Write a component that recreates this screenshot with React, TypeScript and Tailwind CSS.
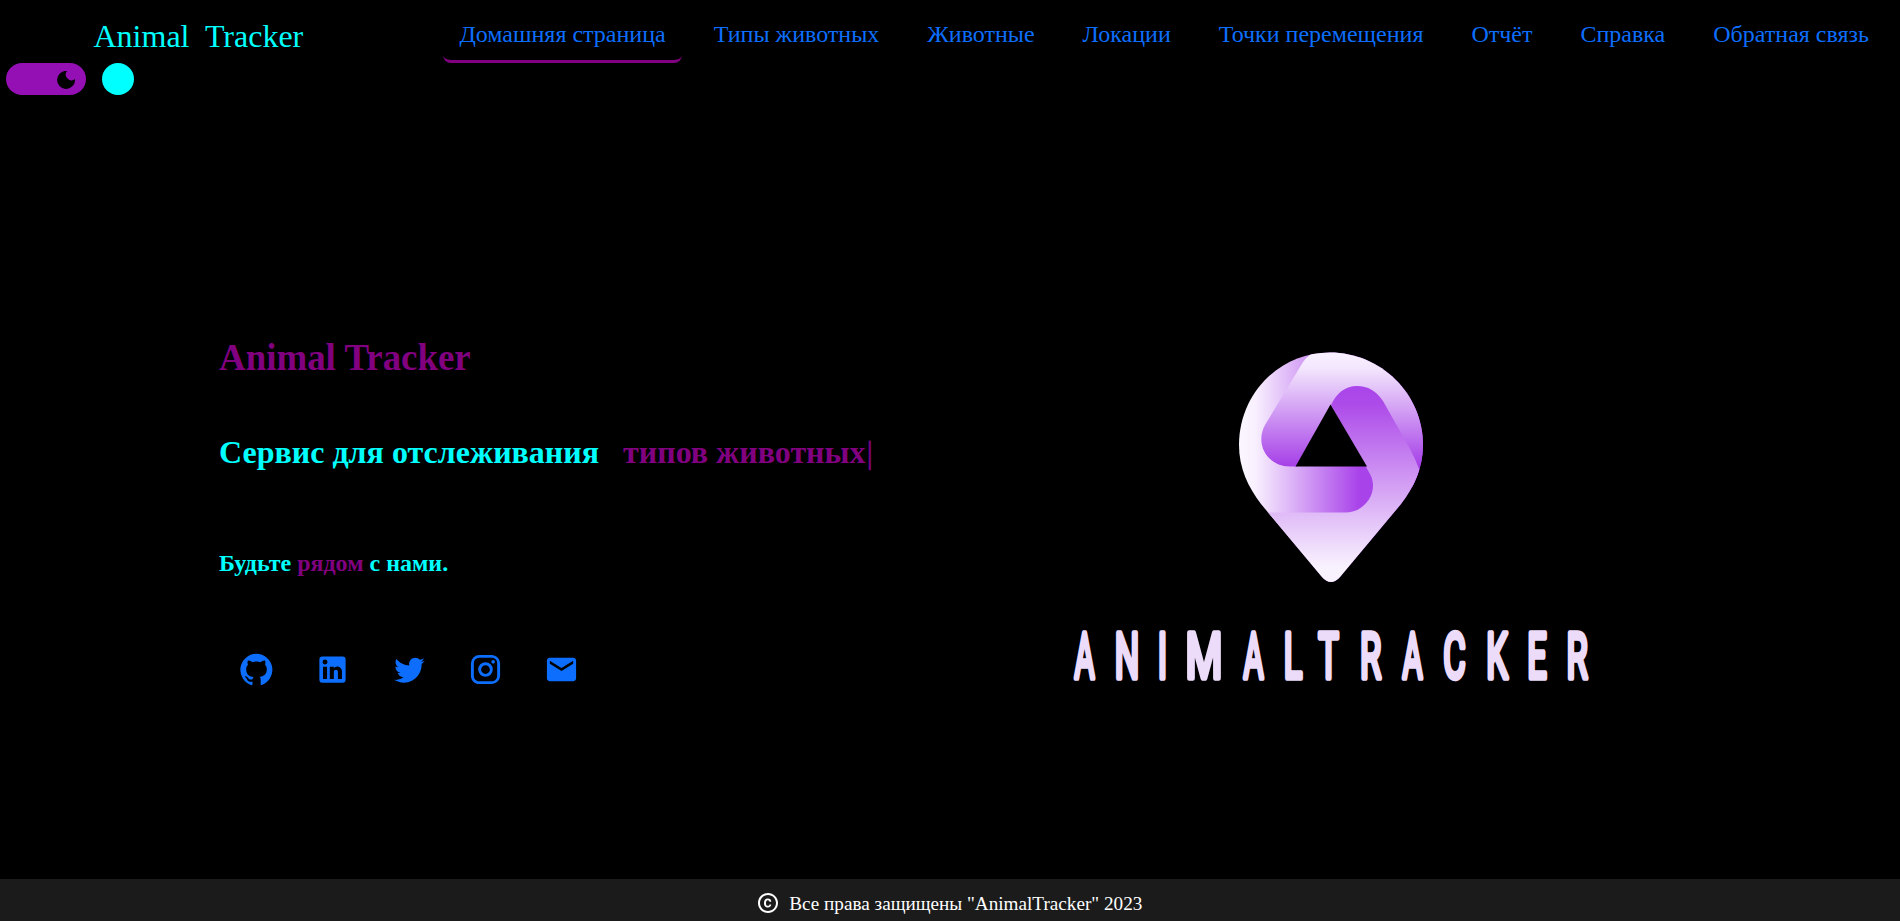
import React from "react";
import { MdEmail, MdCopyright } from "react-icons/md";

const links = [
  "Домашняя страница",
  "Типы животных",
  "Животные",
  "Локации",
  "Точки перемещения",
  "Отчёт",
  "Справка",
  "Обратная связь",
];

const socialPaths = [
  "M12 1.27a11 11 0 00-3.48 21.46c.55.09.73-.28.73-.55v-1.84c-3.03.64-3.67-1.46-3.67-1.46-.55-1.29-1.28-1.65-1.28-1.65-.92-.65.1-.65.1-.65 1.1 0 1.73 1.1 1.73 1.1.92 1.65 2.57 1.2 3.21.92a2 2 0 01.64-1.47c-2.47-.27-5.04-1.19-5.04-5.5 0-1.1.46-2.1 1.2-2.84a3.76 3.76 0 010-2.93s.91-.28 3.11 1.1c1.8-.49 3.7-.49 5.5 0 2.1-1.38 3.02-1.1 3.02-1.1a3.76 3.76 0 01.1 2.83c.74.74 1.2 1.74 1.2 2.94 0 4.21-2.57 5.13-5.04 5.4.45.37.82.92.82 2.02v3.03c0 .27.1.64.73.55A11 11 0 0012 1.27",
  "M19 3a2 2 0 0 1 2 2v14a2 2 0 0 1-2 2H5a2 2 0 0 1-2-2V5a2 2 0 0 1 2-2h14m-.5 15.5v-5.3a3.26 3.26 0 0 0-3.26-3.26c-.85 0-1.84.52-2.32 1.3v-1.11h-2.79v8.37h2.79v-4.93c0-.77.62-1.4 1.39-1.4a1.4 1.4 0 0 1 1.4 1.4v4.93h2.79M6.88 8.56a1.68 1.68 0 0 0 1.68-1.68c0-.93-.75-1.69-1.68-1.69a1.69 1.69 0 0 0-1.69 1.69c0 .93.76 1.68 1.69 1.68m1.39 9.94v-8.37H5.5v8.37h2.77z",
  "M22.46 6c-.77.35-1.6.58-2.46.69.88-.53 1.56-1.37 1.88-2.38-.83.5-1.75.85-2.72 1.05C18.37 4.5 17.26 4 16 4c-2.35 0-4.27 1.92-4.27 4.29 0 .34.04.67.11.98C8.28 9.09 5.11 7.38 3 4.79c-.37.63-.58 1.37-.58 2.15 0 1.49.75 2.81 1.91 3.56-.71 0-1.37-.2-1.95-.5v.03c0 2.08 1.48 3.82 3.44 4.21a4.22 4.22 0 0 1-1.93.07 4.28 4.28 0 0 0 4 2.98 8.521 8.521 0 0 1-5.33 1.84c-.34 0-.68-.02-1.02-.06C3.44 20.29 5.7 21 8.12 21 16 21 20.33 14.46 20.33 8.79c0-.19 0-.37-.01-.56.84-.6 1.56-1.36 2.14-2.23z",
  "M7.8 2h8.4C19.4 2 22 4.6 22 7.8v8.4a5.8 5.8 0 0 1-5.8 5.8H7.8C4.6 22 2 19.4 2 16.2V7.8A5.8 5.8 0 0 1 7.8 2m-.2 2A3.6 3.6 0 0 0 4 7.6v8.8C4 18.39 5.61 20 7.6 20h8.8a3.6 3.6 0 0 0 3.6-3.6V7.6C20 5.61 18.39 4 16.4 4H7.6m9.65 1.5a1.25 1.25 0 0 1 1.25 1.25A1.25 1.25 0 0 1 17.25 8 1.25 1.25 0 0 1 16 6.75a1.25 1.25 0 0 1 1.25-1.25M12 7a5 5 0 0 1 5 5 5 5 0 0 1-5 5 5 5 0 0 1-5-5 5 5 0 0 1 5-5m0 2a3 3 0 0 0-3 3 3 3 0 0 0 3 3 3 3 0 0 0 3-3 3 3 0 0 0-3-3z",
];

// [letter, centre x, optional advance width]
const letters: [string, number, number?][] = [
  ["A", 1084.5, 20],
  ["N", 1127],
  ["I", 1162.5],
  ["M", 1204, 37],
  ["A", 1253.5, 20],
  ["L", 1293],
  ["T", 1328.5],
  ["R", 1370.5],
  ["A", 1412.5, 20],
  ["C", 1454.5],
  ["K", 1497],
  ["E", 1537],
  ["R", 1577],
];
const letterScale = 0.55;

function Logo() {
  return (
    <svg viewBox="1060 340 540 370" className="h-[370px] w-[540px]" role="img">
      <defs>
        <linearGradient id="band" gradientUnits="userSpaceOnUse" x1="0" y1="355" x2="0" y2="465">
          <stop offset="0" stopColor="#f8f0ff" />
          <stop offset=".12" stopColor="#f3e6fd" />
          <stop offset="1" stopColor="#a742e8" />
        </linearGradient>
        <linearGradient id="side" gradientUnits="userSpaceOnUse" x1="1240" y1="0" x2="1368" y2="0">
          <stop offset="0" stopColor="#fbf6ff" />
          <stop offset=".12" stopColor="#f8f0fe" />
          <stop offset=".93" stopColor="#a943ea" />
          <stop offset="1" stopColor="#a743e8" />
        </linearGradient>
        <linearGradient id="tail" gradientUnits="userSpaceOnUse" x1="0" y1="386" x2="0" y2="566">
          <stop offset="0" stopColor="#aa45ea" />
          <stop offset=".1" stopColor="#ad4be9" />
          <stop offset="1" stopColor="#f8f1fe" />
        </linearGradient>
        <clipPath id="pin">
          <path d="M1330 352.500C1381 352.500 1423 394 1423 445C1423 468 1414 487 1401 504L1340 577Q1331 587 1322 577L1261 504C1248 487 1239 468 1239 445C1239 394 1279 352.500 1330 352.500Z" />
        </clipPath>
      </defs>
      <g clipPath="url(#pin)">
        <rect x="1230" y="345" width="200" height="245" fill="url(#side)" />
        <path d="M1314 352Q1306 356 1300 367L1265 425C1255 443 1266 466 1290 466.500H1297L1331 405L1425 500V345H1318Z" fill="url(#band)" />
        <path d="M1331 405Q1340 386 1357 386Q1373 386 1383 401L1410 449Q1415 458 1419 469L1430 500V590H1230V512.500H1345C1367 512.500 1379 490 1370 474Z" fill="url(#tail)" />
      </g>
      <path d="M1330.500 404.500L1367 466.500H1295.500Z" fill="#000" />
      <text
        transform={`scale(${letterScale} 1)`}
        y="677.750"
        textAnchor="middle"
        className="fill-[#eddbfa] stroke-[#eddbfa] font-['Roboto',sans-serif] text-[62.500px] font-normal"
        strokeWidth="4.500"
        strokeLinejoin="round"
      >
        {letters.map(([ch, x, width], i) => (
          <tspan
            key={i}
            x={x / letterScale}
            textLength={width ? width / letterScale : undefined}
            lengthAdjust={width ? "spacingAndGlyphs" : undefined}
            style={{ vectorEffect: "non-scaling-stroke" }}
          >
            {ch}
          </tspan>
        ))}
      </text>
    </svg>
  );
}

export default function App() {
  return (
    <div className="flex h-[921px] w-full flex-col overflow-hidden bg-black font-['Liberation_Serif',serif] text-[#00ffff]">
      <header className="h-[95px] shrink-0">
        <div className="flex h-[63px] items-start justify-between pr-[15px] pl-[93.5px]">
          <div className="mt-[15px] text-[32px] leading-[43px] whitespace-pre">Animal  Tracker</div>
          <nav className="flex gap-4">
            {links.map((label, i) => (
              <a
                key={label}
                className={
                  "h-[63px] rounded-[8px] border-b-[3px] px-4 pt-4 text-[24px] leading-[36px] text-[#0d6efd] " +
                  (i === 0 ? "border-[purple]" : "border-transparent")
                }
              >
                {label}
              </a>
            ))}
          </nav>
        </div>
        <div className="flex gap-4 pl-[6px]">
          <div className="flex h-8 w-20 items-center justify-end rounded-full bg-[#9410b4] pr-[11px]">
            <svg viewBox="0 0 18 18" className="mt-[2px] h-[18px] w-[18px]" fill="#000">
              <path d="M10 0A9 9 0 1 0 18 8A5.700 5.700 0 0 1 10 0Z" />
            </svg>
          </div>
          <div className="h-8 w-8 rounded-full bg-[#00ffff]" />
        </div>
      </header>
      <main className="flex grow">
        <section className="w-[841px] pl-[219px] font-bold">
          <h1 className="mt-[240px] text-[36.900px] leading-[46px] text-[purple]">Animal Tracker</h1>
          <h2 className="mt-[52px] flex text-[32px] leading-[38px] whitespace-nowrap">
            <span>Сервис для отслеживания</span>
            <span className="ml-6 text-[purple]">
              типов животных<span className="ml-px font-normal [-webkit-text-stroke:0.5px_purple]">|</span>
            </span>
          </h2>
          <p className="mt-[78px] text-[24px] leading-[28px]">
            Будьте <span className="text-[purple]">рядом</span> с нами.
          </p>
          <div className="mt-[75px] ml-5 flex items-center gap-[41.25px] text-[#0d6efd]">
            {socialPaths.map((d, i) => (
              <svg key={i} viewBox="0 0 24 24" className="h-[35px] w-[35px]" fill="currentColor">
                <path d={d} />
              </svg>
            ))}
            <MdEmail className="h-[35px] w-[35px]" />
          </div>
        </section>
        <section className="pt-[245px] pl-[219px]">
          <Logo />
        </section>
      </main>
      <footer className="flex h-[42px] shrink-0 items-center justify-center gap-[9.6px] bg-[#1b1b1b] pt-[6px] pr-[2px] text-[19.2px] text-white">
        <MdCopyright className="text-[24px]" />
        <span className="mt-[2px]">Все права защищены "AnimalTracker" 2023</span>
      </footer>
    </div>
  );
}
